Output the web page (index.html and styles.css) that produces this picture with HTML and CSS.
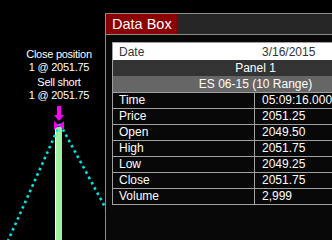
FILE: index.html
```html
<!DOCTYPE html>
<html>
<head>
    <title>Chart Data Box</title>
<link rel="stylesheet" href="styles.css">
</head>
<body>
    <div class="screen">
        <svg class="chart" width="332" height="240" viewBox="0 0 332 240">
            <!-- bar -->
            <rect x="55" y="127" width="1" height="113" fill="#ffffff"/>
            <rect x="56" y="127" width="6" height="113" fill="#9ef09e"/>
            <!-- trend lines -->
            <line x1="60" y1="124" x2="3" y2="252" class="trend"/>
            <line x1="60" y1="124" x2="130" y2="253" class="trend"/>
            <!-- trade marker -->
            <rect x="57" y="106" width="4" height="10" fill="#ff00ff"/>
            <polygon points="54,115 64,115 59,121" fill="#ff00ff"/>
            <polygon points="54,121 59,125.5 54,130" fill="#ff00ff"/>
            <polygon points="64,121 59,125.5 64,130" fill="#ff00ff"/>
        </svg>

        <div class="fills">
            <div class="fill">Close position<br>1 @ 2051.75</div>
            <div class="fill">Sell short<br>1 @ 2051.75</div>
        </div>

        <div class="databox">
            <div class="db-titlebar">
                <div class="db-tab">Data Box</div>
            </div>
            <div class="db-table">
                <div class="db-row db-date">
                    <span class="db-label">Date</span>
                    <span class="db-value">3/16/2015</span>
                </div>
                <div class="db-row db-panel">Panel 1</div>
                <div class="db-row db-symbol">ES 06-15 (10 Range)</div>
                <div class="db-row db-data">
                    <span class="db-label">Time</span>
                    <span class="db-value">05:09:16.000</span>
                </div>
                <div class="db-row db-data">
                    <span class="db-label">Price</span>
                    <span class="db-value">2051.25</span>
                </div>
                <div class="db-row db-data">
                    <span class="db-label">Open</span>
                    <span class="db-value">2049.50</span>
                </div>
                <div class="db-row db-data">
                    <span class="db-label">High</span>
                    <span class="db-value">2051.75</span>
                </div>
                <div class="db-row db-data">
                    <span class="db-label">Low</span>
                    <span class="db-value">2049.25</span>
                </div>
                <div class="db-row db-data">
                    <span class="db-label">Close</span>
                    <span class="db-value">2051.75</span>
                </div>
                <div class="db-row db-data">
                    <span class="db-label">Volume</span>
                    <span class="db-value">2,999</span>
                </div>
            </div>
        </div>
    </div>
</body>
</html>
```

FILE: styles.css
```css
body {
    margin: 0;
    background-color: #000;
    font-family: "Liberation Sans", Arial, sans-serif;
    color: #fff;
}

.screen {
    position: relative;
    width: 332px;
    height: 240px;
    overflow: hidden;
    background-color: #000;
}

.chart {
    position: absolute;
    left: 0;
    top: 0;
}

.chart .trend {
    stroke: #00e6e6;
    stroke-width: 2.6;
    stroke-dasharray: 2.6 3.4;
}

.fills {
    position: absolute;
    left: 0;
    top: 48px;
    width: 118px;
    text-align: center;
    font-size: 11px;
    line-height: 13px;
    letter-spacing: -0.25px;
}

.fill + .fill {
    margin-top: 2px;
}

.databox {
    position: absolute;
    left: 105px;
    top: 13px;
    width: 320px;
    height: 240px;
    border: 1px solid #8a8a8a;
    background-color: #080808;
}

.db-titlebar {
    height: 20px;
    background-color: #262626;
    border-bottom: 1px solid #8a8a8a;
}

.db-tab {
    width: 66px;
    height: 20px;
    padding-left: 6px;
    background-color: #8b0000;
    font-size: 14.5px;
    line-height: 20px;
}

.db-table {
    width: 285px;
    margin: 7px 0 0 6px;
    border: 1px solid #a0a0a0;
    font-size: 12px;
}

.db-row {
    display: flex;
    height: 16px;
    line-height: 16px;
}

.db-date {
    height: 17px;
    line-height: 17px;
    padding-top: 1px;
    box-sizing: border-box;
    background-color: #fff;
    color: #333;
}

.db-panel {
    justify-content: center;
    background-color: #333;
}

.db-symbol {
    justify-content: center;
    background-color: #666;
}

.db-data {
    height: 16px;
    line-height: 15px;
    box-sizing: border-box;
    border-top: 1px solid #a0a0a0;
}

.db-label {
    width: 135px;
    padding-left: 6px;
}

.db-value {
    flex: 1;
    padding-left: 7px;
}

.db-data .db-value {
    border-left: 1px solid #a0a0a0;
}

.db-date .db-value {
    padding-left: 8px;
}
```
